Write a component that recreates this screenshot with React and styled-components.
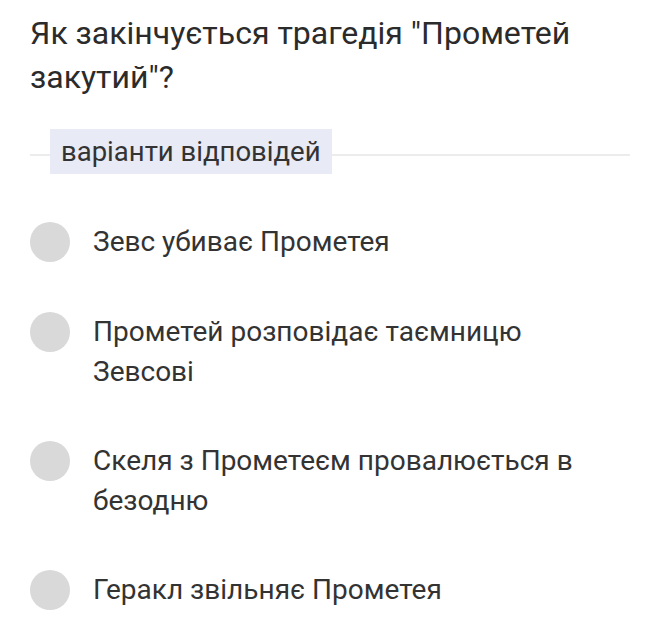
import React from 'react';
import styled, { createGlobalStyle } from 'styled-components';

const GlobalStyle = createGlobalStyle`
    body {
        margin: 0;
        background: #ffffff;
        font-family: Roboto, "Noto Sans", sans-serif;
    }
`;

const options = [
    'Зевс убиває Прометея',
    'Прометей розповідає таємницю Зевсові',
    'Скеля з Прометеєм провалюється в безодню',
    'Геракл звільняє Прометея',
];

function App() {
    return (
        <Page>
            <GlobalStyle />
            <Question>Як закінчується трагедія "Прометей закутий"?</Question>
            <Divider>
                <Label>варіанти відповідей</Label>
            </Divider>
            <OptionList>
                {options.map((text) => (
                    <Option key={text}>
                        <Radio />
                        <OptionText>{text}</OptionText>
                    </Option>
                ))}
            </OptionList>
        </Page>
    );
}

const Page = styled.div`
    padding: 11px 30px 0 30px;
    width: 660px;
    box-sizing: border-box;
`;

const Question = styled.div`
    font-size: 32px;
    line-height: 44px;
    color: #2b2b2b;
    max-width: 590px;
`;

const Divider = styled.div`
    display: flex;
    align-items: center;
    margin-top: 30px;
    padding-left: 20px;
    position: relative;

    &::before {
        content: '';
        position: absolute;
        left: 0;
        right: 0;
        top: 25px;
        height: 2px;
        background: #ececec;
    }
`;

const Label = styled.span`
    position: relative;
    background: #e8eaf6;
    color: #333;
    font-size: 27.5px;
    line-height: 45px;
    padding: 0 11px;
`;

const OptionList = styled.div`
    display: flex;
    flex-direction: column;
    gap: 50px;
    margin-top: 48px;
`;

const Option = styled.div`
    display: flex;
    align-items: flex-start;
    gap: 23px;
`;

const Radio = styled.div`
    flex: none;
    width: 40px;
    height: 40px;
    border-radius: 50%;
    background: #d9d9d9;
`;

const OptionText = styled.div`
    font-size: 28px;
    line-height: 39.5px;
    color: #333;
    max-width: 510px;
`;

export default App;
